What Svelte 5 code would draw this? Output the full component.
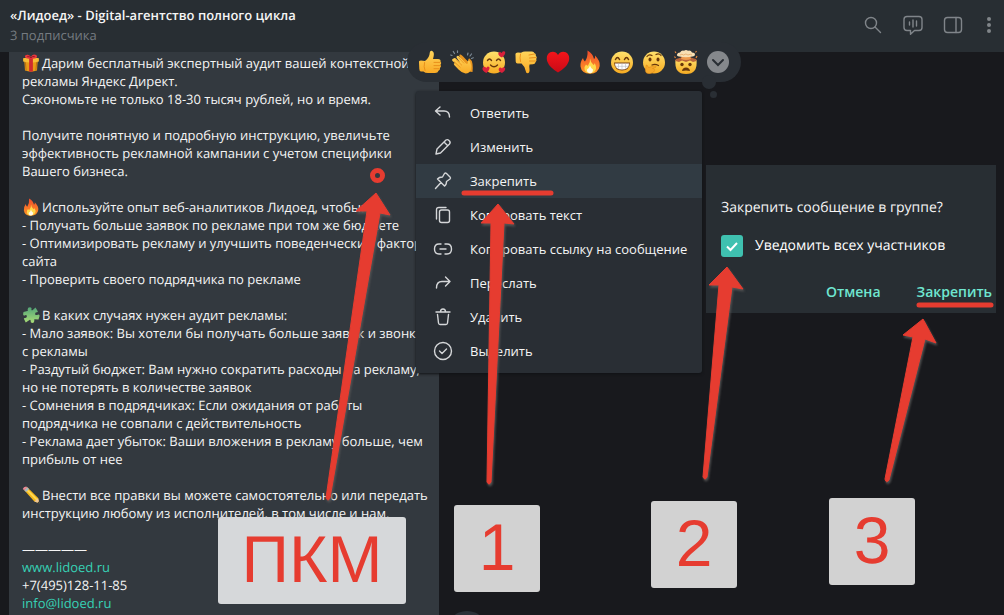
<script lang="ts">
	type Line = { text: string; emoji?: string; href?: string };

	const lines: Line[] = [
		{ text: 'Дарим бесплатный экспертный аудит вашей контекстной', emoji: 'gift' },
		{ text: 'рекламы Яндекс Директ.' },
		{ text: 'Сэкономьте не только 18-30 тысяч рублей, но и время.' },
		{ text: '' },
		{ text: 'Получите понятную и подробную инструкцию, увеличьте' },
		{ text: 'эффективность рекламной кампании с учетом специфики' },
		{ text: 'Вашего бизнеса.' },
		{ text: '' },
		{ text: 'Используйте опыт веб-аналитиков Лидоед, чтобы:', emoji: 'fire' },
		{ text: '- Получать больше заявок по рекламе при том же бюджете' },
		{ text: '- Оптимизировать рекламу и улучшить поведенческий фактор' },
		{ text: 'сайта' },
		{ text: '- Проверить своего подрядчика по рекламе' },
		{ text: '' },
		{ text: 'В каких случаях нужен аудит рекламы:', emoji: 'puzzle' },
		{ text: '- Мало заявок: Вы хотели бы получать больше заявок и звонков' },
		{ text: 'с рекламы' },
		{ text: '- Раздутый бюджет: Вам нужно сократить расходы на рекламу,' },
		{ text: 'но не потерять в количестве заявок' },
		{ text: '- Сомнения в подрядчиках: Если ожидания от работы' },
		{ text: 'подрядчика не совпали с действительность' },
		{ text: '- Реклама дает убыток: Ваши вложения в рекламу больше, чем' },
		{ text: 'прибыль от нее' },
		{ text: '' },
		{ text: 'Внести все правки вы можете самостоятельно или передать', emoji: 'pencil' },
		{ text: 'инструкцию любому из исполнителей, в том числе и нам.' },
		{ text: '' },
		{ text: '—————' },
		{ text: 'www.lidoed.ru', href: '#site' },
		{ text: '+7(495)128-11-85' },
		{ text: 'info@lidoed.ru', href: '#mail' }
	];

	const reactions = ['like', 'clap', 'love', 'dislike', 'heart', 'fire', 'grin', 'think', 'mindblown'];

	const menu = [
		{ icon: 'reply', label: 'Ответить' },
		{ icon: 'edit', label: 'Изменить' },
		{ icon: 'pin', label: 'Закрепить' },
		{ icon: 'copy', label: 'Копировать текст' },
		{ icon: 'link', label: 'Копировать ссылку на сообщение' },
		{ icon: 'forward', label: 'Переслать' },
		{ icon: 'trash', label: 'Удалить' },
		{ icon: 'select', label: 'Выделить' }
	];

	let active = $state('pin');
	let notify = $state(true);
</script>

{#snippet emoji(name: string)}
	<svg class="emoji" viewBox="0 0 24 24" aria-hidden="true">
		{#if name === 'like'}
			<path d="M1 12.500Q0.500 10.500 3 10.500L7 11Q11.500 8 11.800 2.500Q12 0.500 13.700 0.700Q16.500 1.500 15.700 6L15 9H20Q23 9.300 22.500 11.500Q24 13 22.500 14.700Q23.700 16.500 22 18Q22.300 20 20.500 20.700Q20 23 17 23H10Q7 23 5.500 21.500H3Q1.500 21.500 1.300 19Z" fill="url(#skin)" />
			<path d="M16 12.400H22M16 15.600H22M16 18.700H21M6.500 12.500Q5.500 17 7 20.500" fill="none" stroke="#e58a17" stroke-width="0.900" stroke-linecap="round" />
		{:else if name === 'dislike'}
			<path d="M1.500 5Q1 2.500 4 2.500L7 2.700Q9 1.500 11 1.500H18Q20 1.500 20.300 3Q22.300 3.500 21.800 5.500Q23.500 7 22.300 9Q23 11 21.500 12.200Q21 14 19 14.200L15.500 14.500Q15 16 15.500 19Q16 23 13.500 23.300Q12 23.300 11.700 21Q11 16.500 7.500 13.500L3.500 13.500Q1.800 13.500 1.700 11.500Z" fill="url(#skin)" />
			<path d="M15 5L20.500 4M15.500 8L21.500 7.500M15.500 11H21.500M6.500 4Q5.500 8 6.500 11.500" fill="none" stroke="#e58a17" stroke-width="0.900" stroke-linecap="round" />
		{:else if name === 'clap'}
			<path d="M10 7.500Q8.500 4.500 10.300 4.400Q11.500 4.500 15 8.500L18.500 12Q17.800 8.500 19.500 8.600Q21.800 10 22.500 14Q23 18 22.500 22L15 21Z" fill="#e9951f" />
			<path d="M3.500 8.500Q4.500 7.400 5.800 8.400L10 12.400L6.500 7.500Q6.400 5.400 8.600 6L15.500 13Q18.500 15.600 17.700 11.200Q18.600 9.500 20 11.500Q22 16 21 19.500Q19.500 23.600 15.500 23.500Q12 23 8.500 19.400L4.200 15Q3 13.300 4.800 13L8 15.400L2.500 11Q1.300 9.400 3.500 8.500Z" fill="url(#skin)" />
			<path d="M5.500 9L12 15.400M4 11.500L10.500 17.600M8.500 7.500L14 13.400" stroke="#e58a17" stroke-width="0.700" />
			<path d="M2 5.500L0.700 5M4.500 3.500L3.300 1.500M7.500 2.500V0.800M17.500 5L18 3M20 6L21.500 4M21.500 8.500L23.300 7.800" stroke="#7d8b96" stroke-width="1.200" stroke-linecap="round" />
		{:else if name === 'heart'}
			<path d="M12 22.500Q3.500 17.500 1.400 11.800Q-0.700 5 4.300 2.200Q9.200 0.500 12 5Q14.800 0.500 19.700 2.200Q24.700 5 22.600 11.800Q20.500 17.500 12 22.500Z" fill="url(#red)" />
		{:else if name === 'fire'}
			<path d="M9.500 0.500Q15 3.500 16 9Q17.500 8 17 5.500Q22.500 11 21.700 16Q20.500 23.500 12 23.700Q3.500 23.500 2.500 16.500Q2 12 5 8Q5.500 11 7 11.500Q10 7 9.500 0.500Z" fill="url(#flame)" />
			<path d="M12 8.500Q12.500 12.500 15.500 15Q16.700 14.500 16.500 13Q19 17 17.500 20Q15.500 23.300 12 23.300Q7.500 23.200 6.600 19.500Q6 16.500 8 14.500Q9 16 10 15.500Q12.500 12.500 12 8.500Z" fill="#ffd94b" />
			<path d="M12 15.500Q12.700 18 15 19.500Q15 23 12 23.200Q8.500 22.700 9 19.500Q11 18.500 12 15.500Z" fill="#fffbe8" />
		{:else if name === 'gift'}
			<path d="M3 8H21L20 22Q12 25 4 22Z" fill="#e99a17" />
			<path d="M1.500 5.500L12 4L22.500 5.500V10Q12 13 1.500 10Z" fill="#f7bd36" />
			<path d="M9.500 5H14.500V23.500H9.500Z" fill="#cf2b2f" />
			<path d="M4.500 11L5.500 22M19.500 11L18.500 22" stroke="#b96d0f" stroke-width="1.200" />
			<path d="M12 6Q5 7 4 4Q3.700 0.500 8 1Q11 2 12 4Q13 1 16 0.800Q20.500 1 20 4Q19 7 12 6Z" fill="#e8383d" />
			<path d="M7 3.500Q10 3 12 5Q14 2.500 17 3.500" fill="none" stroke="#8f1620" stroke-width="1.200" />
		{:else if name === 'puzzle'}
			<path d="M2 8L7 6.500Q8.500 6.500 7.500 4.500Q7.500 1.500 10.500 1.500Q13.500 2 12.500 5Q12.500 6.200 14 5.500L18 2L21 7Q21.500 8.500 19.500 8.300Q17 8.500 17.500 11Q18.500 13 21 11.500Q23 10.500 23.500 13L22 18L17 17.500Q15.500 17.500 16.500 19.500Q16.500 22.500 13.500 22.500Q11 22 11.500 19.500Q11.500 18 10 18.500L5 22L2.500 17Q2.500 15.500 4.500 16Q7 15.500 6.500 13Q5.500 11 3.500 12.500Q1.500 13 1.500 10.500Z" fill="url(#green)" />
		{:else if name === 'pencil'}
			<path d="M3 5.500L7 1.500L21.500 16L23 23L16.500 20.500Z" fill="#f6b91b" />
			<path d="M5 3.500L20 18.500" stroke="#ffdb58" stroke-width="2" />
			<path d="M16.500 20.500L21.500 16L23 23Z" fill="#efc697" />
			<path d="M20.500 22L22.500 20.500L23 23Z" fill="#333" />
			<path d="M3 5.500L7 1.500L9.500 4L5.500 8Z" fill="#a8b7c2" />
			<path d="M1 4Q2 0.500 5.500 0.500L7 1.500L3 5.500Z" fill="#ed8b96" />
		{:else if name === 'mindblown'}
			<path d="M1.500 10Q12 6 22.500 10Q24 24 12 24Q0 24 1.500 10Z" fill="url(#face)" />
			<path d="M1.500 11Q1 8.500 4 8.500L7 7.500H17L20 8.500Q23 8.500 22.500 11L19 12L16 10.500L12 12L8 10.500L5 12Z" fill="#b9653a" />
			<path d="M8 5H16L17 9Q12 11 7 9Z" fill="#ee9a4e" />
			<path d="M5 6.500Q2.500 6.500 3 4.500Q3.500 2.500 6 2.500Q7.500 0 10 0.700Q12-0.500 14 0.700Q17 0 18 2.500Q21 2.500 21 4.500Q21 6.500 18.500 6.500Q12 8 5 6.500Z" fill="#f8dfb4" />
			<path d="M6 5Q8 3.500 9.500 5Q12 3 14 5Q16.500 3.500 18 5" fill="none" stroke="#e5a867" stroke-width="0.800" />
			<path d="M0.500 6.500L1.500 8M23 6L22 8M1 1.500L2 3M22.500 1L21.500 2.500" stroke="#e8893d" stroke-width="1.200" />
			<circle cx="8" cy="14.500" r="1.700" fill="#68370b" />
			<circle cx="16" cy="14.500" r="1.700" fill="#68370b" />
			<path d="M8 21Q8.500 17.500 12 17.500Q15.500 17.500 16 21Q12 20 8 21Z" fill="#68370b" />
		{:else}
			<circle cx="12" cy="12.500" r="11" fill="url(#face)" />
			{#if name === 'love'}
				<path d="M5.500 10.500Q7.500 7.500 9.500 10.500M14.500 10.500Q16.500 7.500 18.500 10.500M8.500 15Q12 18.500 15.500 15" fill="none" stroke="#68370b" stroke-width="1.400" stroke-linecap="round" />
				<g fill="#d9203a">
					<path d="M20 7.500Q15.500 5.500 16.500 2.800Q17.800 1 19.700 3Q20.500 0.500 22.800 1.600Q24.500 4 20 7.500Z" />
					<path d="M4.500 23Q0 21 0.500 17.900Q2 15.500 4.300 18Q5.200 15.500 7.300 17Q8.500 19 4.500 23Z" />
					<path d="M20 23Q16 21.500 16.800 18.700Q18 16.500 20 18.500Q21 16.500 22.800 17.700Q24.500 20 20 23Z" />
				</g>
			{:else if name === 'grin'}
				<path d="M5.500 9.500Q7.500 5.500 9.500 9.500M14.500 9.500Q16.500 5.500 18.500 9.500" fill="none" stroke="#68370b" stroke-width="1.500" stroke-linecap="round" />
				<path d="M4 12.500H20Q19.500 20.500 12 20.500Q4.500 20.500 4 12.500Z" fill="#79441b" />
				<path d="M5 13.400H19Q19 19.300 12 19.500Q5 19.300 5 13.400Z" fill="#fff" />
				<path d="M5.500 16.300H18.500M8.500 13.500V18.700M12 13.500V19.500M15.500 13.500V18.700" stroke="#b7bcc2" stroke-width="0.600" />
			{:else}
				<ellipse cx="8" cy="9.500" rx="1.500" ry="2" fill="#68370b" />
				<ellipse cx="16" cy="9.500" rx="1.500" ry="2" fill="#68370b" />
				<path d="M5 6.500Q7 4 10 5.500M14 4.500Q17 3 19 5.500M10 15Q13 13.500 16.500 15.500" fill="none" stroke="#68370b" stroke-width="1.200" stroke-linecap="round" />
				<path d="M4 17Q3.500 14.700 5 15L6.500 17.500L13 15.700Q15 16.200 13.500 17.500L10.500 18.500Q14.500 19 11.500 22Q8 25 4.500 23Q2.500 21.500 4 17Z" fill="#f5a82b" stroke="#d98616" stroke-width="0.500" />
			{/if}
		{/if}
	</svg>
{/snippet}

{#snippet icon(name: string)}
	<svg class="icon" viewBox="0 0 20 20" aria-hidden="true">
		{#if name === 'reply'}
			<path d="M7 4L2.500 8L7 12M2.500 8H11Q16.500 8 16.500 14" />
		{:else if name === 'edit'}
			<path d="M3 17L4 12L13 3Q14.500 2 16 3.500Q18 5.200 16.500 7L7.500 16ZM11.500 5.500L14.500 8.500" />
		{:else if name === 'pin'}
			<path d="M11.500 2.500Q12.500 1.500 13.500 2.500L17 6Q18 7 17 8L13.500 10.500Q13.500 14 11.500 15L4.500 8Q6 6 9.500 6ZM8 11.500L2.500 17.500" />
		{:else if name === 'copy'}
			<rect x="6.500" y="5" width="10" height="12.500" rx="2" />
			<path d="M3.500 14V5Q3.500 2.500 6 2.500H13" />
		{:else if name === 'link'}
			<path d="M8 5H6Q1.500 5 1.500 10Q1.500 15 6 15H8M12 5H14Q18.500 5 18.500 10Q18.500 15 14 15H12M7 10H13" />
		{:else if name === 'forward'}
			<path d="M12.500 4L17 8.500L12.500 13M17 8.500H9Q3.500 8.500 3.500 15" />
		{:else if name === 'trash'}
			<path d="M3 5H17M7.500 5Q7.500 2 10 2Q12.500 2 12.500 5M4.500 7.500L5.500 16Q5.700 17.500 7 17.500H13Q14.300 17.500 14.500 16L15.500 7.500" />
		{:else if name === 'select'}
			<circle cx="10" cy="10" r="8.500" />
			<path d="M6.500 10L9 12.500L13.500 8" />
		{:else if name === 'search'}
			<circle cx="8" cy="8" r="5.500" />
			<path d="M12 12L17.500 17.500" />
		{:else if name === 'voice'}
			<path d="M4 1.500H16Q19 1.500 19 4.500V12.500Q19 15.500 16 15.500H11.500L7.500 19.300V15.500H4Q1 15.500 1 12.500V4.500Q1 1.500 4 1.500ZM6.500 7V10M10 5V12M13.500 6V11" />
		{:else if name === 'panel'}
			<rect x="1.500" y="2.500" width="17" height="15" rx="3" />
			<path d="M13 2.500V17.500" />
		{:else}
			<g fill="currentColor" stroke="none">
				<circle cx="10" cy="4" r="2" />
				<circle cx="10" cy="10" r="2" />
				<circle cx="10" cy="16" r="2" />
			</g>
		{/if}
	</svg>
{/snippet}

<svg class="defs" aria-hidden="true">
	<defs>
		<linearGradient id="skin" x1="0" y1="0" x2="0" y2="1">
			<stop offset="0" stop-color="#ffd45a" />
			<stop offset="1" stop-color="#f9aa25" />
		</linearGradient>
		<linearGradient id="face" x1="0" y1="0" x2="0" y2="1">
			<stop offset="0" stop-color="#ffe16c" />
			<stop offset="1" stop-color="#f6ab22" />
		</linearGradient>
		<linearGradient id="flame" x1="0" y1="0" x2="0" y2="1">
			<stop offset="0" stop-color="#f04a2c" />
			<stop offset="1" stop-color="#ff9a26" />
		</linearGradient>
		<linearGradient id="red" x1="0" y1="0" x2="0" y2="1">
			<stop offset="0" stop-color="#f5151a" />
			<stop offset="1" stop-color="#c90b17" />
		</linearGradient>
		<linearGradient id="green" x1="0" y1="0" x2="0" y2="1">
			<stop offset="0" stop-color="#52a477" />
			<stop offset="1" stop-color="#a9dd77" />
		</linearGradient>
	</defs>
</svg>

<div class="window">
	<header class="top">
		<div class="peer">
			<h1>«Лидоед» - Digital-агентство полного цикла</h1>
			<p>3 подписчика</p>
		</div>
		<nav class="tools">
			<button aria-label="Поиск">{@render icon('search')}</button>
			<button aria-label="Видеочат">{@render icon('voice')}</button>
			<button aria-label="Информация">{@render icon('panel')}</button>
			<button class="narrow" aria-label="Меню">{@render icon('more')}</button>
		</nav>
	</header>

	<main class="chat">
		<article class="message">
			{#each lines as line}
				<p>
					{#if line.emoji}{@render emoji(line.emoji)}{/if}{#if line.href}<a href={line.href}>{line.text}</a>{:else}{line.text}{/if}
				</p>
			{/each}
		</article>
	</main>

	<div class="next"></div>

	<div class="reactions">
		{#each reactions as r}
			<button aria-label={r}>{@render emoji(r)}</button>
		{/each}
		<button class="expand" aria-label="Ещё">
			<svg viewBox="0 0 22 22" aria-hidden="true">
				<circle cx="11" cy="11" r="11" />
				<path d="M6 9L11 14L16 9" />
			</svg>
		</button>
	</div>

	<div class="menu">
		{#each menu as item}
			<button class:active={active === item.icon} onmouseenter={() => (active = item.icon)}>
				{@render icon(item.icon)}
				<span>{item.label}</span>
			</button>
		{/each}
	</div>

	<section class="dialog">
		<p>Закрепить сообщение в группе?</p>
		<label>
			<input type="checkbox" bind:checked={notify} />
			<span class="box">
				{#if notify}
					<svg viewBox="0 0 22 22" aria-hidden="true"><path d="M6 11.500L9.500 15L16 8" /></svg>
				{/if}
			</span>
			Уведомить всех участников
		</label>
		<div class="actions">
			<button>Отмена</button>
			<button>Закрепить</button>
		</div>
	</section>

	<svg class="marks" width="1004" height="615" viewBox="0 0 1004 615" aria-hidden="true">
		<circle cx="377.500" cy="175.500" r="5" fill="none" stroke="#e63c30" stroke-width="5" />
		<path class="line" d="M464 193H551M919 305H991" />
		<g class="arrows">
			<path d="M376 193L390 215L380 213L330 498Q328 502 326 498L367 211L356 211Z" />
			<path d="M498 204L514 224L504 223L491 482Q489 486 487 482L491 223L481 223Z" />
			<path d="M727 267L743 289L732 287L707 477Q705 481 703 477L719 285L709 285Z" />
			<path d="M923 319L936 343L925 339L889 480Q886 484 885 479L913 337L903 335Z" />
		</g>
	</svg>

	<div class="tag pkm">ПКМ</div>
	<div class="tag one">1</div>
	<div class="tag two">2</div>
	<div class="tag three">3</div>
</div>

<style>
	:global(body) {
		background: #18191d;
	}
	.window {
		position: relative;
		display: flex;
		flex-direction: column;
		min-height: 100vh;
		overflow: hidden;
		background: #18191d;
		color: #f5f5f5;
		font: 13px/18px 'Open Sans', 'Noto Sans', sans-serif;
		text-rendering: geometricPrecision;
	}
	h1,
	p {
		margin: 0;
	}
	button {
		padding: 0;
		border: 0;
		background: none;
		color: inherit;
		font: inherit;
		cursor: pointer;
	}
	.defs {
		position: absolute;
		width: 0;
		height: 0;
	}
	.icon {
		flex: none;
		width: 20px;
		height: 20px;
		fill: none;
		stroke: currentColor;
		stroke-width: 1.4;
		stroke-linecap: round;
		stroke-linejoin: round;
	}
	.top {
		display: flex;
		justify-content: space-between;
		box-sizing: border-box;
		height: 52px;
		padding: 6px 0 0 10px;
		background: #282e33;
	}
	.peer {
		display: flex;
		flex-direction: column;
		gap: 2px;
	}
	h1 {
		font-size: 13px;
		line-height: 18px;
		font-weight: 600;
	}
	.peer p {
		color: #757b80;
	}
	.tools {
		display: flex;
		align-items: center;
		height: 38px;
		color: #80858a;
	}
	.tools button {
		display: grid;
		place-items: center;
		width: 40px;
		height: 38px;
	}
	.tools .narrow {
		width: 31px;
	}
	.chat {
		display: flex;
		flex: 1;
		padding-left: 9px;
	}
	.message {
		box-sizing: border-box;
		width: 430px;
		padding: 2px 0 3px 13px;
		background: #33393f;
		white-space: nowrap;
		overflow: hidden;
	}
	.message p {
		height: 18px;
	}
	.message a {
		color: #37d1b5;
		text-decoration: none;
	}
	.message .emoji {
		width: 18px;
		height: 18px;
		margin-right: 2px;
		vertical-align: top;
	}
	.next {
		position: absolute;
		top: 611px;
		left: 446px;
		width: 42px;
		height: 42px;
		border-radius: 50%;
		background: #2b3138;
	}
	.reactions {
		position: absolute;
		top: 42px;
		left: 407px;
		display: flex;
		padding: 0 7px;
		border-radius: 20px;
		background: #292e34;
	}
	.reactions::before,
	.reactions::after {
		content: '';
		position: absolute;
		border-radius: 50%;
		background: #292e34;
	}
	.reactions::before {
		top: 33px;
		right: 25px;
		width: 14px;
		height: 14px;
	}
	.reactions::after {
		top: 49px;
		right: 24px;
		width: 7px;
		height: 7px;
	}
	.reactions button {
		display: grid;
		place-items: center;
		width: 32px;
		height: 40px;
	}
	.reactions .emoji {
		width: 24px;
		height: 24px;
	}
	.expand svg {
		width: 22px;
		height: 22px;
		fill: #85888c;
	}
	.expand path {
		fill: none;
		stroke: #292e34;
		stroke-width: 2;
		stroke-linecap: round;
	}
	.menu {
		position: absolute;
		top: 91px;
		left: 416px;
		width: 286px;
		box-sizing: border-box;
		padding: 5px 0;
		border-radius: 3px;
		background: #292e34;
		box-shadow: 0 1px 3px #101215;
	}
	.menu button {
		display: flex;
		align-items: center;
		gap: 17px;
		width: 100%;
		height: 34px;
		padding-left: 17px;
		text-align: left;
		white-space: nowrap;
	}
	.menu .active {
		background: #313b43;
	}
	.menu .icon {
		color: #d5d7d9;
	}
	.dialog {
		position: absolute;
		top: 165px;
		left: 706px;
		display: flex;
		flex-direction: column;
		box-sizing: border-box;
		width: 290px;
		height: 148px;
		padding: 33px 4px 0 15px;
		background: #282e33;
		font-size: 14px;
		line-height: 20px;
	}
	.dialog label {
		display: flex;
		align-items: center;
		gap: 12px;
		margin-top: 17px;
		height: 22px;
		color: #fff;
		font-weight: 500;
	}
	.dialog input {
		position: absolute;
		opacity: 0;
	}
	.box {
		width: 22px;
		height: 22px;
		border-radius: 3px;
		background: #3fc1b0;
	}
	.box svg {
		display: block;
		fill: none;
		stroke: #fff;
		stroke-width: 2;
	}
	.actions {
		display: flex;
		justify-content: flex-end;
		gap: 36px;
		margin-top: 25px;
		color: #6fe6d0;
		font-weight: 600;
	}
	.marks {
		position: absolute;
		top: 0;
		left: 0;
		pointer-events: none;
	}
	.line {
		fill: none;
		stroke: #e63c30;
		stroke-width: 5;
		stroke-linecap: round;
	}
	.arrows {
		fill: #e63c30;
		stroke: #e63c30;
		stroke-linejoin: round;
		filter: drop-shadow(1px 2px 1px #555);
	}
	.tag {
		position: absolute;
		box-sizing: border-box;
		width: 86px;
		height: 87px;
		border-radius: 3px;
		background: #d2d2d2;
		color: #e63c30;
		font: 66px/84px 'Liberation Sans', Arial, sans-serif;
		text-align: center;
	}
	.pkm {
		top: 517px;
		left: 218px;
		width: 188px;
		background: #d6d8da;
	}
	.one {
		top: 505px;
		left: 454px;
	}
	.two {
		top: 501px;
		left: 651px;
	}
	.three {
		top: 498px;
		left: 829px;
	}
</style>
